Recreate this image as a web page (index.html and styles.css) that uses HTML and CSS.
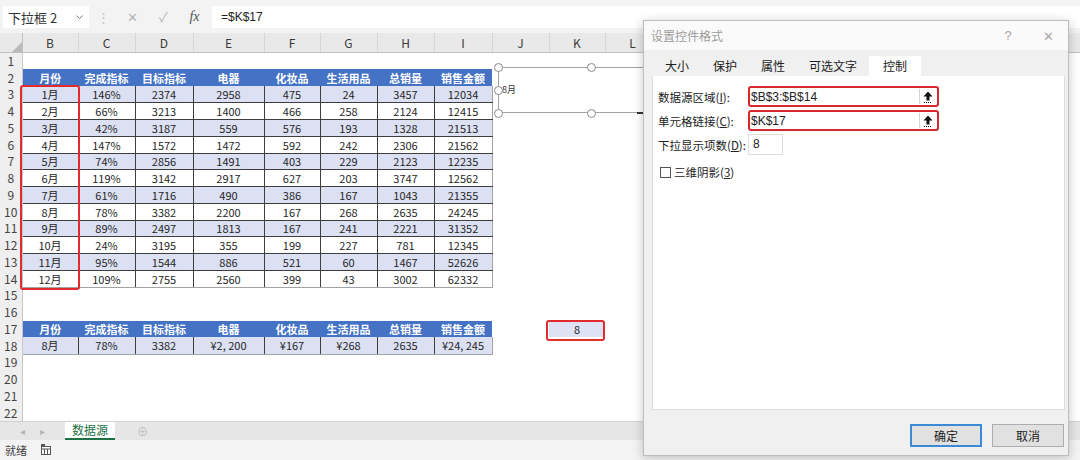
FILE: index.html
```html
<!DOCTYPE html>
<html lang="zh-CN">
<head>
    <meta charset="utf-8"/>
    <title>数据源 - Excel</title>
    <link rel="stylesheet" href="styles.css">
</head>
<body>
<div class="app">
    <!-- name box + formula input -->
    <div class="formula-bar">
        <div class="name-box">
            <span>下拉框 2</span>
            <svg class="nb-arrow" width="7" height="4" viewBox="0 0 7 4"><path d="M0.5 0.5L3.5 3.5L6.5 0.5" fill="none" stroke="#777" stroke-width="1"/></svg>
        </div>
        <div class="fb-grip">⋮</div>
        <span class="fb-icon fb-cancel">✕</span>
        <span class="fb-icon fb-enter">✓</span>
        <span class="fb-icon fb-fx">fx</span>
        <div class="fb-input">=$K$17</div>
    </div>

    <div class="sheet">
        <table class="grid">
            <colgroup>
                <col class="col-rh"><col class="col-b"><col class="col-c"><col class="col-d"><col class="col-e">
                <col class="col-f"><col class="col-g"><col class="col-h"><col class="col-i"><col class="col-j">
                <col class="col-k"><col class="col-l"><col class="col-x"><col class="col-x"><col class="col-x">
                <col class="col-x"><col class="col-x"><col class="col-x"><col class="col-x">
            </colgroup>
            <tr class="cols">
                <th class="corner"><svg width="10" height="10" viewBox="0 0 10 10"><path d="M10 0V10H0Z" fill="#b9b9b9"/></svg></th>
                <th>B</th><th>C</th><th>D</th><th>E</th><th>F</th><th>G</th><th>H</th><th>I</th>
                <th>J</th><th>K</th><th>L</th><th></th><th></th><th></th><th></th><th></th><th></th><th></th>
            </tr>
            <tr><th>1</th></tr>
            <tr class="head"><th>2</th><td>月份</td><td>完成指标</td><td>目标指标</td><td>电器</td><td>化妆品</td><td>生活用品</td><td>总销量</td><td>销售金额</td></tr>
            <tr class="data band"><th>3</th><td>1月</td><td>146%</td><td>2374</td><td>2958</td><td>475</td><td>24</td><td>3457</td><td>12034</td></tr>
            <tr class="data"><th>4</th><td>2月</td><td>66%</td><td>3213</td><td>1400</td><td>466</td><td>258</td><td>2124</td><td>12415</td></tr>
            <tr class="data band"><th>5</th><td>3月</td><td>42%</td><td>3187</td><td>559</td><td>576</td><td>193</td><td>1328</td><td>21513</td></tr>
            <tr class="data"><th>6</th><td>4月</td><td>147%</td><td>1572</td><td>1472</td><td>592</td><td>242</td><td>2306</td><td>21562</td></tr>
            <tr class="data band"><th>7</th><td>5月</td><td>74%</td><td>2856</td><td>1491</td><td>403</td><td>229</td><td>2123</td><td>12235</td></tr>
            <tr class="data"><th>8</th><td>6月</td><td>119%</td><td>3142</td><td>2917</td><td>627</td><td>203</td><td>3747</td><td>12562</td></tr>
            <tr class="data band"><th>9</th><td>7月</td><td>61%</td><td>1716</td><td>490</td><td>386</td><td>167</td><td>1043</td><td>21355</td></tr>
            <tr class="data"><th>10</th><td>8月</td><td>78%</td><td>3382</td><td>2200</td><td>167</td><td>268</td><td>2635</td><td>24245</td></tr>
            <tr class="data band"><th>11</th><td>9月</td><td>89%</td><td>2497</td><td>1813</td><td>167</td><td>241</td><td>2221</td><td>31352</td></tr>
            <tr class="data"><th>12</th><td>10月</td><td>24%</td><td>3195</td><td>355</td><td>199</td><td>227</td><td>781</td><td>12345</td></tr>
            <tr class="data band"><th>13</th><td>11月</td><td>95%</td><td>1544</td><td>886</td><td>521</td><td>60</td><td>1467</td><td>52626</td></tr>
            <tr class="data last"><th>14</th><td>12月</td><td>109%</td><td>2755</td><td>2560</td><td>399</td><td>43</td><td>3002</td><td>62332</td></tr>
            <tr><th>15</th></tr>
            <tr><th>16</th></tr>
            <tr class="head"><th>17</th><td>月份</td><td>完成指标</td><td>目标指标</td><td>电器</td><td>化妆品</td><td>生活用品</td><td>总销量</td><td>销售金额</td><td class="blank"></td><td class="linked">8</td></tr>
            <tr class="data band last"><th>18</th><td>8月</td><td>78%</td><td>3382</td><td>¥2, 200</td><td>¥167</td><td>¥268</td><td>2635</td><td>¥24, 245</td></tr>
            <tr><th>19</th></tr>
            <tr><th>20</th></tr>
            <tr><th>21</th></tr>
            <tr><th>22</th></tr>
        </table>
    </div>

    <div class="sheet-tabs">
        <span class="st-nav">◂</span>
        <span class="st-nav">▸</span>
        <span class="st-tab">数据源</span>
        <span class="st-add">⊕</span>
    </div>

    <div class="status-bar">
        <span>就绪</span>
        <svg class="st-macro" width="12" height="12" viewBox="0 0 12 12">
            <rect x="1.5" y="2.5" width="9" height="8" fill="#fff" stroke="#555"/>
            <path d="M1.5 5H10.5M4.5 5V10.5M7.5 5V10.5" stroke="#555"/>
            <rect x="1" y="0" width="4" height="3" fill="#555"/>
        </svg>
    </div>

    <!-- annotations over the sheet -->
    <div class="mark mark-range"></div>
    <div class="mark mark-link"></div>

    <!-- selected combo box control -->
    <div class="combo">
        <span class="combo-text">8月</span>
        <span class="combo-tick"></span>
        <span class="handle h-tl"></span>
        <span class="handle h-tm"></span>
        <span class="handle h-ml"></span>
        <span class="handle h-bl"></span>
        <span class="handle h-bm"></span>
    </div>

    <div class="dialog">
        <div class="dlg-title">
            <span class="dlg-caption">设置控件格式</span>
            <span class="dlg-help">?</span>
            <span class="dlg-close">✕</span>
        </div>
        <div class="dlg-tabs">
            <span class="dlg-tab">大小</span>
            <span class="dlg-tab">保护</span>
            <span class="dlg-tab">属性</span>
            <span class="dlg-tab">可选文字</span>
            <span class="dlg-tab active">控制</span>
        </div>
        <div class="dlg-panel">
            <div class="field">
                <label>数据源区域(<u>I</u>):</label>
                <div class="ref-edit">
                    <span class="ref-text">$B$3:$B$14</span>
                    <span class="ref-btn"><svg width="10" height="12" viewBox="0 0 10 12"><path d="M5 0.5L0.5 5.5H3.5V9.5H6.5V5.5H9.5Z" fill="#111"/><path d="M1 11.5H9" stroke="#111" stroke-dasharray="1 1"/></svg></span>
                </div>
            </div>
            <div class="field">
                <label>单元格链接(<u>C</u>):</label>
                <div class="ref-edit">
                    <span class="ref-text">$K$17</span>
                    <span class="ref-btn"><svg width="10" height="12" viewBox="0 0 10 12"><path d="M5 0.5L0.5 5.5H3.5V9.5H6.5V5.5H9.5Z" fill="#111"/><path d="M1 11.5H9" stroke="#111" stroke-dasharray="1 1"/></svg></span>
                </div>
            </div>
            <div class="field">
                <label>下拉显示项数(<u>D</u>):</label>
                <div class="count">8</div>
            </div>
            <label class="check"><span class="box"></span>三维阴影(<u>3</u>)</label>
        </div>
        <div class="dlg-foot">
            <span class="btn default">确定</span>
            <span class="btn">取消</span>
        </div>
    </div>
</div>
</body>
</html>
```

FILE: styles.css
```css
body {
    margin: 0;
    font-family: "Noto Sans CJK SC", "Noto Sans", sans-serif;
    background-color: #ffffff;
    color: #262626;
}

.app {
    position: relative;
    width: 1080px;
    height: 460px;
    display: flex;
    flex-direction: column;
    overflow: hidden;
}

/* formula bar */

.formula-bar {
    height: 33px;
    flex: none;
    box-sizing: border-box;
    padding-top: 6px;
    background-color: #f3f3f3;
    display: flex;
    align-items: flex-start;
}

.name-box {
    width: 86px;
    height: 22px;
    margin-left: 3px;
    box-sizing: border-box;
    padding: 0 6px 0 5px;
    background-color: #ffffff;
    display: flex;
    align-items: center;
    justify-content: space-between;
    font-size: 13px;
    color: #333;
}

.fb-grip {
    width: 28px;
    height: 22px;
    line-height: 22px;
    text-align: center;
    color: #c4c4c4;
    font-size: 13px;
}

.fb-icon {
    width: 31px;
    height: 22px;
    line-height: 22px;
    text-align: center;
    font-size: 13px;
    color: #b5b5b5;
}

.fb-fx {
    font-family: "Liberation Serif", serif;
    font-style: italic;
    color: #555;
    font-size: 14px;
}

.fb-input {
    flex: 1;
    height: 22px;
    margin-left: 2px;
    padding-left: 9px;
    background-color: #ffffff;
    line-height: 22px;
    font-size: 12px;
    font-family: "Liberation Sans", sans-serif;
    color: #222;
}

/* worksheet grid */

.sheet {
    flex: 1;
    overflow: hidden;
}

.grid {
    width: 1108px;
    table-layout: fixed;
    border-collapse: collapse;
}

.col-rh { width: 22px; }
.col-b { width: 56px; }
.col-c { width: 57px; }
.col-d { width: 58px; }
.col-e { width: 71px; }
.col-f { width: 56px; }
.col-g { width: 57px; }
.col-h { width: 57px; }
.col-i { width: 58px; }
.col-j { width: 57px; }
.col-k { width: 56px; }
.col-l { width: 55px; }
.col-x { width: 64px; }

.grid tr {
    height: 16.75px;
}

.grid th,
.grid td {
    padding: 0;
    white-space: nowrap;
    overflow: hidden;
    text-align: center;
}

.grid th {
    background-color: #efefef;
    border-right: 1px solid #c8c8c8;
    font-weight: normal;
    font-size: 12px;
    line-height: 14px;
    color: #444;
}

.grid tr.cols {
    height: 19.5px;
}

.cols th {
    background-color: #e9e9e9;
    border-right: 1px solid #d6d6d6;
    border-bottom: 1px solid #c2c2c2;
    font-size: 12px;
    color: #3a3a3a;
}

.cols th.corner {
    border-right-color: #c2c2c2;
    text-align: right;
    vertical-align: bottom;
    line-height: 0;
}

.grid td {
    font-size: 11px;
    line-height: 14px;
    color: #262626;
}

.head td {
    background-color: #4472c4;
    color: #ffffff;
    font-weight: bold;
}

.data td {
    border-right: 1px solid #3e3e3e;
    border-bottom: 1px solid #3e3e3e;
}

.data td:last-child {
    border-right-color: #a3a3a3;
}

.data.last td {
    border-bottom-color: #a3a3a3;
}

.band td {
    background-color: #dbe0f3;
}

.head td.blank {
    background-color: transparent;
}

.head td.linked {
    background-color: #dfe2f4;
    color: #262626;
    font-weight: normal;
}

/* sheet tabs + status */

.sheet-tabs {
    height: 19px;
    flex: none;
    box-sizing: border-box;
    background-color: #e6e6e6;
    border-top: 1px solid #d2d2d2;
    display: flex;
    align-items: stretch;
    padding-left: 12px;
    font-size: 12px;
}

.st-nav {
    width: 20px;
    line-height: 18px;
    text-align: center;
    color: #b4b4b4;
    font-size: 10px;
}

.st-tab {
    margin-left: 13px;
    width: 50px;
    text-align: center;
    line-height: 16px;
    background-color: #ffffff;
    color: #1e7145;
    border-bottom: 2px solid #1e7145;
}

.st-add {
    margin-left: 22px;
    line-height: 18px;
    color: #bdbdbd;
    font-size: 11px;
}

.status-bar {
    height: 20px;
    flex: none;
    background-color: #f3f3f3;
    display: flex;
    align-items: center;
    padding-left: 5px;
    font-size: 11px;
    color: #444;
}

.st-macro {
    margin-left: 13px;
}

/* red highlight frames */

.mark {
    position: absolute;
    box-sizing: border-box;
    border: 2.5px solid #e12b2f;
    border-radius: 3px;
}

.mark-range {
    left: 20px;
    top: 85px;
    width: 60px;
    height: 205px;
}

.mark-link {
    left: 546px;
    top: 320px;
    width: 59px;
    height: 21px;
}

/* combo box selection */

.combo {
    position: absolute;
    left: 498px;
    top: 67px;
    width: 150px;
    height: 46px;
    box-sizing: border-box;
    border: 1.5px solid #a3a3a3;
    border-right: none;
    background-color: #ffffff;
}

.combo-text {
    position: absolute;
    left: 3px;
    top: 16px;
    font-size: 9px;
    line-height: 11px;
    color: #333;
}

.combo-tick {
    position: absolute;
    left: 138px;
    bottom: -1.5px;
    width: 7px;
    height: 1.5px;
    background-color: #333;
}

.handle {
    position: absolute;
    width: 9px;
    height: 9px;
    box-sizing: border-box;
    border: 1px solid #8a8a8a;
    border-radius: 50%;
    background-color: #ffffff;
}

.h-tl { left: -5px; top: -5px; }
.h-tm { left: 88px; top: -5px; }
.h-ml { left: -5px; top: 18px; }
.h-bl { left: -5px; top: 41px; }
.h-bm { left: 88px; top: 41px; }

/* format control dialog */

.dialog {
    position: absolute;
    left: 643px;
    top: 20px;
    width: 426px;
    height: 436px;
    box-sizing: border-box;
    border: 1px solid #bdbdbd;
    background-color: #f0f0f0;
    box-shadow: 0 2px 10px rgba(0, 0, 0, 0.22);
    font-size: 12px;
    color: #222;
}

.dlg-title {
    height: 29px;
    background-color: #fafafa;
    display: flex;
    align-items: center;
}

.dlg-caption {
    flex: 1;
    padding-left: 7px;
    color: #9c9c9c;
}

.dlg-help {
    width: 30px;
    margin-right: 7px;
    text-align: center;
    color: #a8a8a8;
    font-family: "Liberation Sans", sans-serif;
    font-size: 13px;
}

.dlg-close {
    width: 36px;
    margin-right: 2px;
    text-align: center;
    color: #a8a8a8;
    font-size: 13px;
}

.dlg-tabs {
    height: 26px;
    box-sizing: border-box;
    padding-left: 9px;
    display: flex;
    align-items: flex-end;
}

.dlg-tab {
    height: 20px;
    line-height: 20px;
    padding: 0 12px;
    color: #222;
}

.dlg-tab.active {
    padding: 0 14px;
    background-color: #ffffff;
}

.dlg-panel {
    height: 334px;
    margin: 0 3px 0 8px;
    box-sizing: border-box;
    padding: 10px 0 0 5px;
    background-color: #ffffff;
    border: 1px solid #dcdcdc;
    border-top: none;
    font-size: 11.5px;
}

.field {
    height: 21px;
    margin-bottom: 3px;
    display: flex;
    align-items: center;
}

.field label {
    width: 90px;
    white-space: nowrap;
}

.ref-edit {
    width: 191px;
    height: 21px;
    box-sizing: border-box;
    border: 2.5px solid #d8282d;
    border-radius: 3px;
    display: flex;
    align-items: center;
    justify-content: space-between;
    padding-right: 1px;
}

.ref-text {
    padding-left: 1px;
    font-family: "Liberation Sans", sans-serif;
    font-size: 12px;
}

.ref-btn {
    width: 16px;
    height: 15px;
    border-left: 1px solid #d4d4d4;
    display: flex;
    align-items: center;
    justify-content: center;
}

.count {
    width: 35px;
    height: 21px;
    box-sizing: border-box;
    border: 1px solid #dedede;
    padding-left: 4px;
    line-height: 18px;
    font-family: "Liberation Sans", sans-serif;
    font-size: 12px;
}

.check {
    margin-top: 9px;
    display: flex;
    align-items: center;
}

.check .box {
    width: 11px;
    height: 11px;
    margin: 0 3px 0 2px;
    box-sizing: border-box;
    border: 1px solid #555;
    background-color: #ffffff;
}

.dlg-foot {
    display: flex;
    justify-content: flex-end;
    gap: 10px;
    padding: 14px 4px 0 0;
}

.btn {
    width: 72px;
    height: 23px;
    box-sizing: border-box;
    border: 1px solid #adadad;
    background-color: #e1e1e1;
    text-align: center;
    line-height: 21px;
}

.btn.default {
    border: 2px solid #3a8ad6;
    line-height: 19px;
}
```
